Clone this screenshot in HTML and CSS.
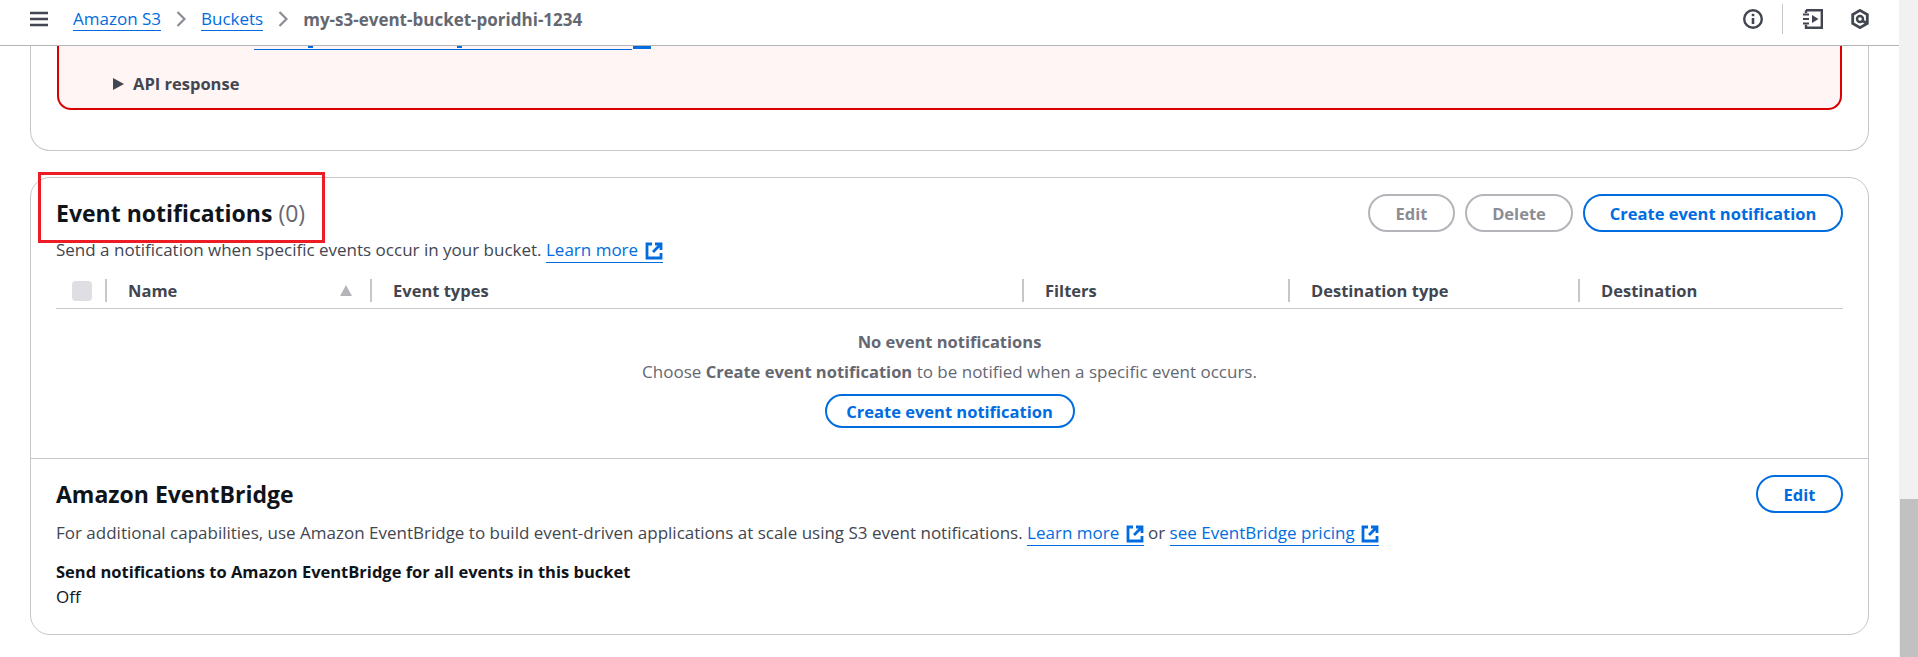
FILE: index.html
```html
<!DOCTYPE html>
<html lang="en">
<head>
  <meta charset="UTF-8">
  <title>my-s3-event-bucket-poridhi-1234 - S3 bucket</title>
  <meta name="viewport" content="width=device-width, initial-scale=1.0">
  <link rel="stylesheet" href="styles.css">
</head>
<body>
  <svg class="defs" width="0" height="0">
    <symbol id="ext" viewBox="0 0 18 18">
      <path d="M7 2H2v14h14v-5" fill="none" stroke="currentColor" stroke-width="2.800"/>
      <path d="M10 2h6v6M15.500 2.500 8 10" fill="none" stroke="currentColor" stroke-width="2.800"/>
    </symbol>
  </svg>

  <div class="page">
    <div class="main">
      <header class="topbar">
        <svg class="menu-icon" width="18" height="16" viewBox="0 0 18 16">
          <path d="M0 2h18M0 8h18M0 14h18" stroke="#424650" stroke-width="2.400"/>
        </svg>
        <nav class="crumbs">
          <a href="#">Amazon S3</a>
          <svg class="chev" width="10" height="16" viewBox="0 0 10 16"><path d="M1.500 1l7 7-7 7" fill="none" stroke="#8c8c94" stroke-width="2.200"/></svg>
          <a href="#">Buckets</a>
          <svg class="chev" width="10" height="16" viewBox="0 0 10 16"><path d="M1.500 1l7 7-7 7" fill="none" stroke="#8c8c94" stroke-width="2.200"/></svg>
          <span class="crumb-current">my-s3-event-bucket-poridhi-1234</span>
        </nav>
        <div class="tools">
          <svg class="tool-info" width="20" height="20" viewBox="0 0 20 20">
            <circle cx="10" cy="10" r="8.800" fill="none" stroke="#424650" stroke-width="2.400"/>
            <path d="M10 9v6" stroke="#424650" stroke-width="2.600"/>
            <path d="M10 4.800v2.400" stroke="#424650" stroke-width="2.600"/>
          </svg>
          <span class="tool-sep"></span>
          <svg class="tool-book" width="21" height="20" viewBox="0 0 21 20">
            <path d="M4 1.200h15.800v17.600H4v-3M4 4V1.200" fill="none" stroke="#424650" stroke-width="2.400"/>
            <path d="M1 5.500h6M1 10h6M1 14.500h6" stroke="#424650" stroke-width="2.200"/>
            <path d="M10 6l6.500 4-6.500 4z" fill="#424650"/>
          </svg>
          <svg class="tool-hex" width="18" height="20" viewBox="0 0 18 20">
            <path d="M9 1.400l7.300 4.200v8.800L9 18.600l-7.300-4.200V5.600z" fill="none" stroke="#424650" stroke-width="2.800"/>
            <circle cx="9" cy="10" r="3" fill="none" stroke="#424650" stroke-width="2.400"/>
            <path d="M11 11.500l5 3" stroke="#424650" stroke-width="2.800"/>
          </svg>
        </div>
      </header>

      <section class="card card-top">
        <div class="alert">
          <div class="alert-link"><span class="cut-bit cut-y"></span><span class="cut-bit cut-g"></span><span class="cut-ext"></span></div>
          <div class="api-row">
            <span class="caret"></span>
            <span>API response</span>
          </div>
        </div>
      </section>

      <section class="card card-events">
        <div class="panel-events">
          <div class="panel-head">
            <div class="head-text">
              <h2 class="panel-title">Event notifications <span class="count">(0)</span></h2>
              <p class="desc">Send a notification when specific events occur in your bucket. <a href="#" class="ext-link">Learn more <svg class="ext-icon"><use href="#ext"/></svg></a></p>
            </div>
            <div class="actions">
              <button class="btn btn-edit" disabled>Edit</button>
              <button class="btn btn-delete" disabled>Delete</button>
              <button class="btn btn-create">Create event notification</button>
            </div>
          </div>

          <div class="table-head">
            <div class="th th-check"><span class="checkbox"></span></div>
            <div class="th th-name">Name<span class="sort-up"></span></div>
            <div class="th">Event types</div>
            <div class="th">Filters</div>
            <div class="th">Destination type</div>
            <div class="th">Destination</div>
          </div>

          <div class="empty">
            <div class="empty-title">No event notifications</div>
            <div class="empty-text">Choose <b>Create event notification</b> to be notified when a specific event occurs.</div>
            <button class="btn btn-small">Create event notification</button>
          </div>
        </div>

        <div class="panel-bridge">
          <div class="bridge-head">
            <h2 class="panel-title">Amazon EventBridge</h2>
            <button class="btn btn-bridge">Edit</button>
          </div>
          <p class="desc bridge-desc">For additional capabilities, use Amazon EventBridge to build event-driven applications at scale using S3 event notifications. <a href="#" class="ext-link">Learn more <svg class="ext-icon"><use href="#ext"/></svg></a> or <a href="#" class="ext-link">see EventBridge pricing <svg class="ext-icon"><use href="#ext"/></svg></a></p>
          <div class="field-label">Send notifications to Amazon EventBridge for all events in this bucket</div>
          <div class="field-value">Off</div>
        </div>
      </section>

      <div class="annotation"></div>
    </div>
    <div class="scrollbar"><div class="scroll-thumb"></div></div>
  </div>
</body>
</html>
```

FILE: styles.css
```css
* {
  box-sizing: border-box;
}
html, body {
  margin: 0;
  height: 657px;
  overflow: hidden;
}
body {
  font-family: "Open Sans", "Noto Sans", Arial, sans-serif;
  font-size: 17px;
  line-height: 23px;
  color: #424650;
  background: #fff;
}
a {
  color: #006ce0;
  text-decoration: none;
}
b {
  font-size: 16.500px;
}
.defs {
  position: absolute;
}
.page {
  display: flex;
  height: 657px;
}
.main {
  position: relative;
  flex: 1;
  min-width: 0;
}

/* top bar */
.topbar {
  display: flex;
  align-items: center;
  height: 46px;
  padding: 0 30px 7px 30px;
  border-bottom: 1px solid #b4b4bb;
  background: #fff;
}
.menu-icon {
  margin-right: 25px;
}
.crumbs {
  display: flex;
  align-items: center;
  gap: 15px;
  flex: 1;
}
.crumbs a {
  border-bottom: 1px solid #006ce0;
  line-height: 22px;
}
.crumb-current {
  font-weight: 700;
  color: #656871;
}
.tools {
  display: flex;
  align-items: center;
}
.tool-sep {
  width: 1px;
  height: 30px;
  margin: 0 19px;
  background: #c6c6cd;
}
.tool-hex {
  margin-left: 28px;
}

/* cards */
.card {
  margin: 0 30px;
  border: 1px solid #c6c6cd;
  background: #fff;
}
.card-top {
  height: 105px;
  padding: 0 26px;
  border-top: 0;
  border-radius: 0 0 20px 20px;
}
.card-events {
  margin-top: 26px;
  height: 458px;
  border-radius: 20px;
}

/* error alert, its top is scrolled under the bar */
.alert {
  height: 64px;
  padding-top: 3px;
  border: 2px solid #db0000;
  border-top: 0;
  border-radius: 0 0 14px 14px;
  background: #fff5f4;
}
.alert-link {
  position: relative;
  width: 378px;
  height: 1px;
  margin-left: 195px;
  background: #006ce0;
}
.cut-bit {
  position: absolute;
  top: -3px;
  width: 5px;
  height: 2px;
  background: #006ce0;
}
.cut-y {
  left: 54px;
}
.cut-g {
  left: 203px;
}
.cut-ext {
  position: absolute;
  left: 379px;
  top: -3px;
  width: 18px;
  height: 3px;
  background: #006ce0;
}
.api-row {
  display: flex;
  align-items: center;
  margin: 22px 0 0 54px;
  font-size: 16.500px;
  font-weight: 700;
}
.caret {
  width: 0;
  height: 0;
  margin-right: 9px;
  border-left: 11px solid #424650;
  border-top: 6.500px solid transparent;
  border-bottom: 6.500px solid transparent;
}

/* event notifications panel */
.panel-events {
  height: 281px;
  padding: 0 25px;
  border-bottom: 1px solid #c6c6cd;
}
.panel-head {
  display: flex;
  justify-content: space-between;
  padding-top: 20px;
}
.panel-title {
  margin: 0;
  font-size: 23px;
  line-height: 30px;
  font-weight: 700;
  color: #0f141a;
}
.count {
  font-weight: 400;
  color: #656871;
}
.desc {
  margin: 10px 0 0;
}
.ext-link {
  border-bottom: 1px solid #006ce0;
  padding-bottom: 1px;
}
.ext-icon {
  width: 18px;
  height: 18px;
  margin-left: 2px;
  vertical-align: -4px;
  color: #006ce0;
}
.actions {
  display: flex;
  gap: 10px;
  margin-top: -4px;
}
.btn {
  font-family: inherit;
  font-size: 16.500px;
  font-weight: 700;
  height: 38px;
  padding: 0;
  background: #fff;
  color: #006ce0;
  border: 2px solid #006ce0;
  border-radius: 20px;
}
.btn[disabled] {
  color: #8c8c94;
  border-color: #b4b4bb;
}
.btn-edit {
  width: 87px;
}
.btn-delete {
  width: 108px;
}
.btn-create {
  width: 260px;
}

/* table */
.table-head {
  display: grid;
  grid-template-columns: 49px 265px 652px 266px 290px 265px;
  height: 30px;
  margin-top: 18px;
  border-bottom: 1px solid #c6c6cd;
}
.th {
  display: flex;
  align-items: center;
  height: 23px;
  padding-left: 21px;
  border-left: 2px solid #c6c6cd;
  font-size: 16.500px;
  font-weight: 700;
}
.th-check {
  padding-left: 16px;
  border-left: 0;
}
.th-name {
  position: relative;
}
.checkbox {
  width: 20px;
  height: 20px;
  border-radius: 4px;
  background: #dedee3;
}
.sort-up {
  position: absolute;
  right: 18px;
  width: 0;
  height: 0;
  border-left: 6.500px solid transparent;
  border-right: 6.500px solid transparent;
  border-bottom: 11px solid #b4b4bb;
}
.empty {
  display: flex;
  flex-direction: column;
  align-items: center;
  padding-top: 21px;
}
.empty-title {
  font-size: 16.500px;
  font-weight: 700;
  color: #656871;
}
.empty-text {
  margin-top: 7px;
  color: #656871;
}
.btn-small {
  height: 34px;
  width: 250px;
  margin-top: 11px;
}

/* eventbridge panel */
.panel-bridge {
  padding: 16px 25px 0;
}
.bridge-head {
  display: flex;
  justify-content: space-between;
  align-items: center;
}
.btn-bridge {
  width: 87px;
}
.bridge-desc {
  margin-top: 8px;
}
.field-label {
  margin-top: 16px;
  font-size: 16.500px;
  font-weight: 700;
  color: #0f141a;
}
.field-value {
  margin-top: 2px;
  color: #0f141a;
}

/* red box drawn over the screenshot */
.annotation {
  position: absolute;
  left: 38px;
  top: 172px;
  width: 287px;
  height: 71px;
  border: 3px solid #ed1c24;
}

/* scrollbar */
.scrollbar {
  width: 19px;
  padding: 499px 0 0 1px;
  background: #f1f1f1;
}
.scroll-thumb {
  height: 158px;
  background: #c1c1c1;
}
```
